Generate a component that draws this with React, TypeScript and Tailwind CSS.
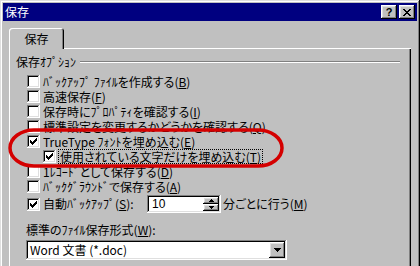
import React from "react";

const jp =
  "font-['Noto_Sans_CJK_JP','Noto_Sans_CJK_SC',sans-serif] [font-feature-settings:'palt'] text-[12px] leading-[14px] text-black whitespace-nowrap";
const raised =
  "bg-[#c0c0c0] shadow-[inset_-1px_-1px_#000,inset_1px_1px_#fff,inset_-2px_-2px_#808080,inset_2px_2px_#dfdfdf]";
const sunken =
  "bg-white shadow-[inset_-1px_-1px_#fff,inset_1px_1px_#808080,inset_-2px_-2px_#dfdfdf,inset_2px_2px_#000]";

// win95 style check mark, pixel rows
const checkPixels: [number, number, number][] = [
  [9, 3, 1],
  [8, 4, 2],
  [3, 5, 1],
  [7, 5, 3],
  [3, 6, 2],
  [6, 6, 3],
  [3, 7, 5],
  [4, 8, 3],
  [5, 9, 1],
];

function CheckBox({ checked }: { checked?: boolean }) {
  return (
    <span className={`relative block w-[13px] h-[13px] shrink-0 ${sunken}`}>
      {checked && (
        <svg
          className="absolute left-0 top-0"
          width="13"
          height="13"
          viewBox="0 0 13 13"
          shapeRendering="crispEdges"
        >
          {checkPixels.map(([x, y, w], i) => (
            <rect key={i} x={x} y={y} width={w} height={1} fill="#000" />
          ))}
        </svg>
      )}
    </span>
  );
}

function Row({
  checked,
  children,
}: {
  checked?: boolean;
  children: React.ReactNode;
}) {
  return (
    <div className="flex items-center h-[15px] gap-[3px]">
      <CheckBox checked={checked} />
      <span className={jp}>{children}</span>
    </div>
  );
}

function Mn({ c }: { c: string }) {
  return <span className="underline underline-offset-[1px]">{c}</span>;
}

const closePixels: [number, number, number][] = [
  [0, 0, 2],
  [6, 0, 2],
  [1, 1, 2],
  [5, 1, 2],
  [2, 2, 4],
  [3, 3, 2],
  [2, 4, 4],
  [1, 5, 2],
  [5, 5, 2],
  [0, 6, 2],
  [6, 6, 2],
];

export default function App() {
  return (
    <div className="relative w-[420px] h-[266px] overflow-hidden bg-[#c0c0c0]">
      <div className="w-[420px] h-[300px] p-[3px] bg-[#c0c0c0] shadow-[inset_-1px_-1px_#000,inset_1px_1px_#dfdfdf,inset_-2px_-2px_#808080,inset_2px_2px_#fff]">
        {/* title bar */}
        <div className="flex items-center justify-between h-[18px] bg-[#000080] pl-[2px] pr-[2px]">
          <span className={`${jp} !text-white`}>保存</span>
          <div className="flex gap-[2px]">
            <div className={`flex items-center justify-center w-[16px] h-[14px] ${raised}`}>
              <span className="font-['Liberation_Sans',sans-serif] font-bold text-[11px] leading-[11px] text-black">
                ?
              </span>
            </div>
            <div className={`flex items-center justify-center w-[16px] h-[14px] ${raised}`}>
              <svg width="8" height="7" viewBox="0 0 8 7" shapeRendering="crispEdges">
                {closePixels.map(([x, y, w], i) => (
                  <rect key={i} x={x} y={y} width={w} height={1} fill="#000" />
                ))}
              </svg>
            </div>
          </div>
        </div>

        {/* body */}
        <div className="pt-[7px] px-[6px]">
          <div className="flex">
            <div className="relative z-10 -mb-px flex items-center justify-center w-[55px] h-[21px] rounded-t-[3px] bg-[#c0c0c0] shadow-[inset_1px_1px_#fff,inset_-1px_0_#000,inset_-2px_0_#808080]">
              <span className={jp}>保存</span>
            </div>
          </div>

          <div className="h-[240px] pt-[7px] pl-[7px] pr-[11px] shadow-[inset_1px_1px_#fff,inset_-1px_0_#000,inset_-2px_0_#808080]">
            {/* group label */}
            <div className="flex items-center h-[14px]">
              <span className={jp}>保存ｵﾌﾟｼｮﾝ</span>
              <div className="flex-1 ml-[4px] h-[2px] border-t border-t-[#808080] border-b border-b-white" />
            </div>

            <div className="mt-[5px] pl-[11px]">
              <Row>
                ﾊﾞｯｸｱｯﾌﾟ ﾌｧｲﾙを作成する(<Mn c="B" />)
              </Row>
              <Row>
                高速保存(<Mn c="F" />)
              </Row>
              <Row>
                保存時にﾌﾟﾛﾊﾟﾃｨを確認する(<Mn c="I" />)
              </Row>
              <Row>
                標準設定を変更するかどうかを確認する(<Mn c="Q" />)
              </Row>
              <Row checked>
                TrueType ﾌｫﾝﾄを埋め込む(<Mn c="E" />)
              </Row>
              <div className="flex items-center h-[15px] gap-[2px] pl-[16px]">
                <CheckBox checked />
                <span
                  className={`${jp} h-[15px] flex items-center px-[1px] border border-dotted border-black`}
                >
                  使用されている文字だけを埋め込む(<Mn c="T" />)
                </span>
              </div>
              <Row>
                1ﾚｺｰﾄﾞとして保存する(<Mn c="D" />)
              </Row>
              <Row>
                ﾊﾞｯｸｸﾞﾗｳﾝﾄﾞで保存する(<Mn c="A" />)
              </Row>

              {/* auto backup */}
              <div className="flex items-center h-[18px] mt-[1px] gap-[3px]">
                <CheckBox checked />
                <span className={`${jp} w-[101px]`}>
                  自動ﾊﾞｯｸｱｯﾌﾟ(<Mn c="S" />):
                </span>
                <div className={`flex items-center justify-between w-[74px] h-[18px] pl-[5px] pr-[2px] ${sunken}`}>
                  <span className="font-['Liberation_Sans',sans-serif] text-[12px] leading-[14px] text-black">
                    10
                  </span>
                  <div className="flex flex-col">
                    <div className={`flex items-center justify-center w-[16px] h-[7px] ${raised}`}>
                      <svg width="5" height="3" viewBox="0 0 5 3" shapeRendering="crispEdges">
                        <path d="M2 0h1v1h1v1h1v1H0V2h1V1h1z" fill="#000" />
                      </svg>
                    </div>
                    <div className={`flex items-center justify-center w-[16px] h-[7px] ${raised}`}>
                      <svg width="5" height="3" viewBox="0 0 5 3" shapeRendering="crispEdges">
                        <path d="M0 0h5v1H4v1H3v1H2V2H1V1H0z" fill="#000" />
                      </svg>
                    </div>
                  </div>
                </div>
                <span className={`${jp} -ml-[1px]`}>
                  分ごとに行う(<Mn c="M" />)
                </span>
              </div>
            </div>

            {/* default format */}
            <div className="mt-[10px] pl-[10px]">
              <div className="h-[14px] flex items-center">
                <span className={jp}>
                  標準のﾌｧｲﾙ保存形式(<Mn c="W" />):
                </span>
              </div>
              <div className={`mt-[3px] flex items-center justify-between w-[261px] h-[20px] pl-[4px] pr-[2px] ${sunken}`}>
                <span className={jp}>Word 文書 (*.doc)</span>
                <div className={`flex items-center justify-center w-[16px] h-[16px] ${raised}`}>
                  <svg width="7" height="4" viewBox="0 0 7 4" shapeRendering="crispEdges">
                    <path d="M0 0h7v1H6v1H5v1H4v1H3V3H2V2H1V1H0z" fill="#000" />
                  </svg>
                </div>
              </div>
            </div>
          </div>
        </div>
      </div>

      {/* red marker around the TrueType options */}
      <svg
        className="absolute left-0 top-0 pointer-events-none"
        width="420"
        height="266"
        viewBox="0 0 420 266"
      >
        <rect
          x="10"
          y="130"
          width="272"
          height="36"
          rx="24"
          ry="18"
          fill="none"
          stroke="#d40000"
          strokeWidth="3.5"
        />
      </svg>
    </div>
  );
}
